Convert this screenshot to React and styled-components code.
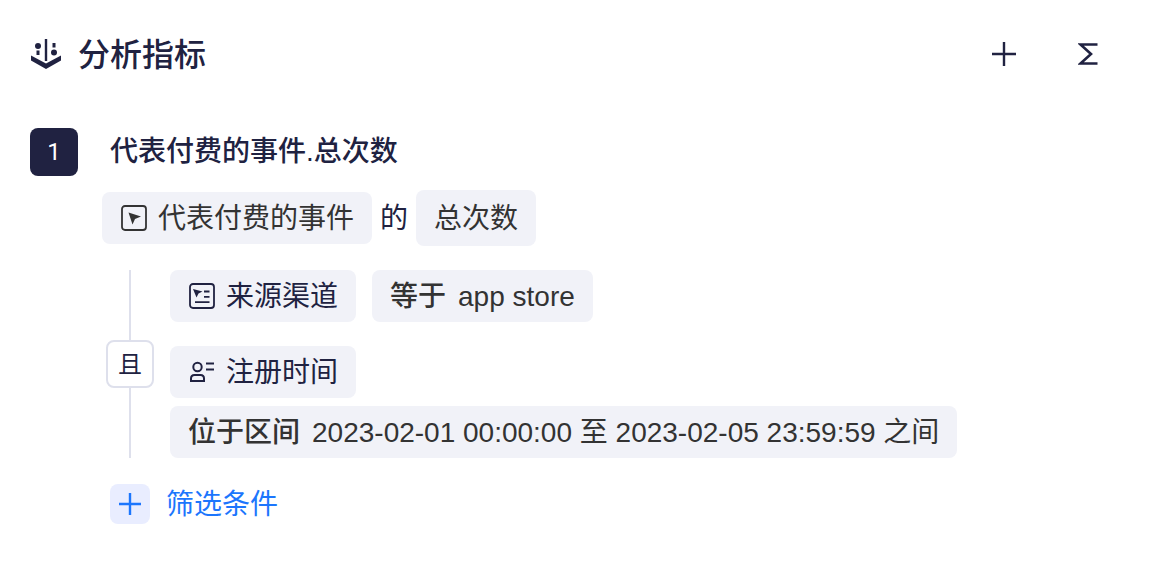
import React from "react";
import styled, { createGlobalStyle } from "styled-components";

const GlobalStyle = createGlobalStyle`
  * { box-sizing: border-box; }
  body {
    margin: 0;
    background: #fff;
    color: #202241;
    font-family: "Liberation Sans", "Noto Sans CJK SC", sans-serif;
    font-size: 28px;
    line-height: 40px;
  }
  button { font: inherit; color: inherit; border: 0; background: none; padding: 0; cursor: pointer; }
  svg { display: block; flex: none; }
`;

const Panel = styled.main`
  padding: 30px 46px 46px 30px;
`;

const Header = styled.header`
  display: flex;
  align-items: center;
  gap: 16px;
  height: 48px;
`;

const Title = styled.h1`
  flex: 1;
  margin: 0;
  padding-top: 2px;
  font-size: 32px;
  line-height: 48px;
  font-weight: 500;
`;

const Actions = styled.div`
  display: flex;
  gap: 44px;
`;

const IconButton = styled.button`
  display: grid;
  place-items: center;
  width: 40px;
  height: 40px;
`;

const Metric = styled.section`
  display: flex;
  align-items: flex-start;
  gap: 24px;
  margin-top: 50px;
`;

const Index = styled.span`
  flex: none;
  width: 48px;
  height: 48px;
  border-radius: 8px;
  background: #202241;
  color: #fff;
  font-family: Roboto, sans-serif;
  font-size: 24px;
  line-height: 48px;
  text-align: center;
`;

const MetricBody = styled.div`
  flex: 1;
  min-width: 0;
`;

const MetricName = styled.h2`
  margin: 0;
  padding: 4px 8px 0;
  font-size: 28px;
  line-height: 40px;
  font-weight: 500;
`;

const Formula = styled.div`
  display: flex;
  align-items: center;
  gap: 8px;
  margin-top: 18px;
`;

const Chip = styled.button`
  display: flex;
  align-items: center;
  gap: ${(p) => (p.$value ? "12px" : "10px")};
  height: ${(p) => (p.$tall ? "56px" : "52px")};
  padding: 0 18px;
  border-radius: 8px;
  background: #f1f2f8;
  color: ${(p) => (p.$navy ? "#202241" : "#333")};
  white-space: nowrap;
`;

const Label = styled.span`
  padding-top: 2px;
  font-weight: ${(p) => (p.$strong ? 500 : 400)};
`;

const Filters = styled.div`
  display: flex;
  gap: 16px;
  margin: 24px 0 26px 4px;
`;

const Relation = styled.div`
  display: flex;
  flex-direction: column;
  align-items: center;
  width: 48px;
  &::before, &::after {
    content: "";
    flex: 1;
    width: 2px;
    background: #dee0ec;
  }
`;

const RelationButton = styled.button`
  width: 48px;
  height: 48px;
  padding-top: 2px;
  border: 2px solid #dee0ec;
  border-radius: 8px;
  font-size: 24px;
  line-height: 40px;
`;

const Conditions = styled.div`
  display: flex;
  flex-direction: column;
  gap: 24px;
`;

const Condition = styled.div`
  display: flex;
  flex-wrap: wrap;
  flex-direction: ${(p) => (p.$stacked ? "column" : "row")};
  align-items: flex-start;
  gap: ${(p) => (p.$stacked ? "8px" : "16px")};
`;

const AddFilter = styled.button`
  display: flex;
  align-items: center;
  gap: 16px;
  height: 40px;
  margin-left: 8px;
  color: #1c76fd;
`;

const AddBadge = styled.span`
  display: grid;
  place-items: center;
  width: 40px;
  height: 40px;
  border-radius: 8px;
  background: #e9edff;
`;

const MetricIcon = () => (
  <svg width="32" height="32" viewBox="0 0 32 32" fill="currentColor" aria-hidden="true">
    <path d="M1 17.500 16 25.500 31 17.500V22.500L16 31 1 22.500Z" />
    <path d="M14.800 1h2.400v22h-2.400zM6.500 12.500h3v4.500h-3zM22.500 5h3v4.500h-3z" />
    <circle cx="8" cy="8" r="3" />
    <circle cx="24" cy="14.500" r="3" />
  </svg>
);

const PlusIcon = ({ size }) => (
  <svg width={size} height={size} viewBox={`0 0 ${size} ${size}`} fill="none" stroke="currentColor" strokeWidth="2.4" aria-hidden="true">
    <path d={`M0 ${size / 2}H${size}M${size / 2} 0V${size}`} />
  </svg>
);

const SigmaIcon = () => (
  <svg width="20" height="22" viewBox="0 0 20 22" fill="none" stroke="currentColor" strokeWidth="2.6" aria-hidden="true">
    <path d="M19.500 1.500H2.500L13 11 2.500 20.500H19.500" />
  </svg>
);

const EventIcon = () => (
  <svg width="28" height="28" viewBox="0 0 28 28" aria-hidden="true">
    <rect x="2" y="2" width="24" height="24" rx="3" fill="none" stroke="currentColor" strokeWidth="1.8" />
    <path d="M8.500 8.500 21 12.500 15 15 12.500 20.500Z" fill="currentColor" />
  </svg>
);

const EventPropertyIcon = () => (
  <svg width="28" height="28" viewBox="0 0 28 28" aria-hidden="true">
    <rect x="2" y="2" width="24" height="24" rx="3" fill="none" stroke="currentColor" strokeWidth="1.8" />
    <path d="M5 7 14.500 9.500 10.500 11.500 8.500 15.500Z" fill="currentColor" />
    <path d="M16 9.500h5.500M16 14.800h5.500M7 20.200h14.500" fill="none" stroke="currentColor" strokeWidth="1.8" />
  </svg>
);

const UserPropertyIcon = () => (
  <svg width="28" height="28" viewBox="0 0 28 28" fill="none" stroke="currentColor" strokeWidth="2" aria-hidden="true">
    <circle cx="9.500" cy="9" r="4.200" />
    <path d="M3 23V20.500Q3 17 6.500 17H12.500Q16 17 16 20.500V23ZM18 5.500H26M18 11.500H26" />
  </svg>
);

export default function App() {
  return (
    <>
      <GlobalStyle />
      <Panel>
        <Header>
          <MetricIcon />
          <Title>分析指标</Title>
          <Actions>
            <IconButton type="button" aria-label="添加指标"><PlusIcon size={24} /></IconButton>
            <IconButton type="button" aria-label="添加公式"><SigmaIcon /></IconButton>
          </Actions>
        </Header>
        <Metric>
          <Index>1</Index>
          <MetricBody>
            <MetricName>代表付费的事件.总次数</MetricName>
            <Formula>
              <Chip type="button"><EventIcon /><Label>代表付费的事件</Label></Chip>
              <Label>的</Label>
              <Chip type="button" $tall><Label>总次数</Label></Chip>
            </Formula>
            <Filters>
              <Relation>
                <RelationButton type="button">且</RelationButton>
              </Relation>
              <Conditions>
                <Condition>
                  <Chip type="button" $navy><EventPropertyIcon /><Label>来源渠道</Label></Chip>
                  <Chip type="button" $value><Label $strong>等于</Label><Label>app store</Label></Chip>
                </Condition>
                <Condition $stacked>
                  <Chip type="button" $navy><UserPropertyIcon /><Label>注册时间</Label></Chip>
                  <Chip type="button" $value>
                    <Label $strong>位于区间</Label>
                    <Label>2023-02-01 00:00:00 至 2023-02-05 23:59:59 之间</Label>
                  </Chip>
                </Condition>
              </Conditions>
            </Filters>
            <AddFilter type="button">
              <AddBadge><PlusIcon size={22} /></AddBadge>
              <Label>筛选条件</Label>
            </AddFilter>
          </MetricBody>
        </Metric>
      </Panel>
    </>
  );
}
